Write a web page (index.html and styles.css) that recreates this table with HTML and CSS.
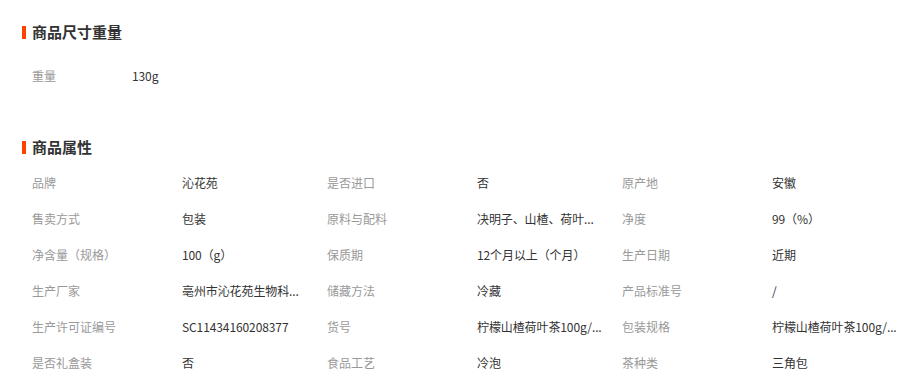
FILE: index.html
```html
<!DOCTYPE html>
<html lang="zh-CN">
<head>
<meta charset="utf-8">
<title>商品属性</title>
<link rel="stylesheet" href="styles.css">
</head>
<body>
<div class="page">
  <section class="sec sec-size">
    <h2 class="sec-title"><span class="bar"></span>商品尺寸重量</h2>
    <div class="weight-row">
      <span class="lbl w-lbl">重量</span>
      <span class="val">130g</span>
    </div>
  </section>
  <section class="sec sec-attr">
    <h2 class="sec-title"><span class="bar"></span>商品属性</h2>
    <div class="attr-grid">
      <span class="lbl">品牌</span><span class="val">沁花苑</span>
      <span class="lbl">是否进口</span><span class="val">否</span>
      <span class="lbl">原产地</span><span class="val">安徽</span>

      <span class="lbl">售卖方式</span><span class="val">包装</span>
      <span class="lbl">原料与配料</span><span class="val">决明子、山楂、荷叶...</span>
      <span class="lbl">净度</span><span class="val">99（%）</span>

      <span class="lbl">净含量（规格）</span><span class="val">100（g）</span>
      <span class="lbl">保质期</span><span class="val">12个月以上（个月）</span>
      <span class="lbl">生产日期</span><span class="val">近期</span>

      <span class="lbl">生产厂家</span><span class="val">亳州市沁花苑生物科...</span>
      <span class="lbl">储藏方法</span><span class="val">冷藏</span>
      <span class="lbl">产品标准号</span><span class="val">/</span>

      <span class="lbl">生产许可证编号</span><span class="val">SC11434160208377</span>
      <span class="lbl">货号</span><span class="val">柠檬山楂荷叶茶100g/...</span>
      <span class="lbl">包装规格</span><span class="val">柠檬山楂荷叶茶100g/...</span>

      <span class="lbl">是否礼盒装</span><span class="val">否</span>
      <span class="lbl">食品工艺</span><span class="val">冷泡</span>
      <span class="lbl">茶种类</span><span class="val">三角包</span>
    </div>
  </section>
</div>
</body>
</html>
```

FILE: styles.css
```css
* { box-sizing: border-box; }
html, body { margin: 0; padding: 0; background: #fff; }
body {
  font-family: "Noto Sans CJK SC", "Microsoft YaHei", sans-serif;
  font-size: 12px;
  color: #333;
}
.page {
  padding: 22px 0 0 22px;
}
.sec-title {
  display: flex;
  align-items: center;
  gap: 6px;
  margin: 0;
  height: 20px;
  font-size: 15px;
  font-weight: bold;
  color: #333;
  line-height: 20px;
}
.bar {
  width: 4px;
  height: 13px;
  background: #ff4200;
}
.weight-row {
  display: flex;
  align-items: center;
  height: 36px;
  margin-top: 15px;
  padding-left: 10px;
}
.w-lbl { width: 100px; }
.sec-attr { margin-top: 44px; }
.attr-grid {
  display: grid;
  grid-template-columns: repeat(3, 150px 145px);
  grid-auto-rows: 36px;
  align-items: center;
  margin-top: 7px;
  padding-left: 10px;
}
.lbl { color: #999; white-space: nowrap; }
.val {
  color: #333;
  white-space: nowrap;
  letter-spacing: -0.1px;
}
```
